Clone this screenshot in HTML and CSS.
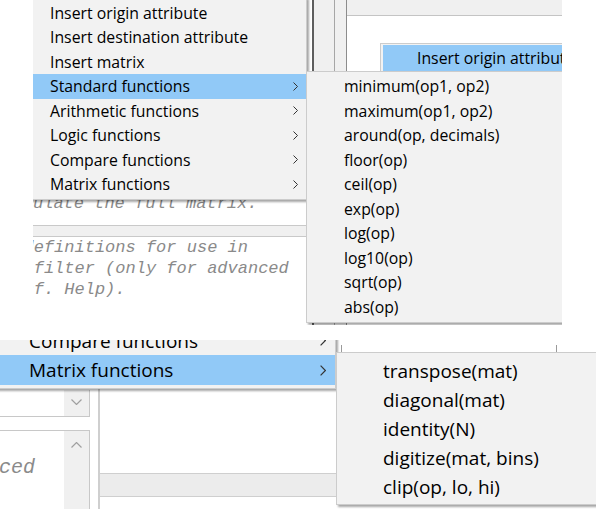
FILE: index.html
```html
<!DOCTYPE html>
<html>
<head>
<meta charset="utf-8">
<link rel="stylesheet" href="styles.css">
</head>
<body>
<div class="canvas">
  <section class="shot shot-top">
    <div class="bg">
      <div class="pane-left">
        <div class="editor editor-a">
          <div class="code">ulate the full matrix.</div>
        </div>
        <div class="splitter"></div>
        <div class="editor editor-b">
          <div class="code">definitions for use in</div>
          <div class="code"> filter (only for advanced</div>
          <div class="code">cf. Help).</div>
        </div>
      </div>
      <div class="pane-right">
        <div class="rcol rcol-1"></div>
        <div class="rcol rcol-2"></div>
        <div class="rcol rcol-3">
          <div class="toolbar"></div>
          <div class="dialog-area">
            <div class="menu popup">
              <div class="item active"><span class="label">Insert origin attribute</span></div>
            </div>
          </div>
        </div>
      </div>
    </div>

    <div class="menu main-menu">
      <div class="item"><span class="label">Insert origin attribute</span></div>
      <div class="item"><span class="label">Insert destination attribute</span></div>
      <div class="item"><span class="label">Insert matrix</span></div>
      <div class="item active"><span class="label">Standard functions</span><svg class="chev" viewBox="0 0 5 9"><polyline points="0.5,0.5 4.5,4.5 0.5,8.5"/></svg></div>
      <div class="item"><span class="label">Arithmetic functions</span><svg class="chev" viewBox="0 0 5 9"><polyline points="0.5,0.5 4.5,4.5 0.5,8.5"/></svg></div>
      <div class="item"><span class="label">Logic functions</span><svg class="chev" viewBox="0 0 5 9"><polyline points="0.5,0.5 4.5,4.5 0.5,8.5"/></svg></div>
      <div class="item"><span class="label">Compare functions</span><svg class="chev" viewBox="0 0 5 9"><polyline points="0.5,0.5 4.5,4.5 0.5,8.5"/></svg></div>
      <div class="item"><span class="label">Matrix functions</span><svg class="chev" viewBox="0 0 5 9"><polyline points="0.5,0.5 4.5,4.5 0.5,8.5"/></svg></div>
    </div>

    <div class="menu sub-menu">
      <div class="item"><span class="label">minimum(op1, op2)</span></div>
      <div class="item"><span class="label">maximum(op1, op2)</span></div>
      <div class="item"><span class="label">around(op, decimals)</span></div>
      <div class="item"><span class="label">floor(op)</span></div>
      <div class="item"><span class="label">ceil(op)</span></div>
      <div class="item"><span class="label">exp(op)</span></div>
      <div class="item"><span class="label">log(op)</span></div>
      <div class="item"><span class="label">log10(op)</span></div>
      <div class="item"><span class="label">sqrt(op)</span></div>
      <div class="item"><span class="label">abs(op)</span></div>
    </div>
  </section>

  <section class="shot shot-bottom">
    <div class="bg">
      <div class="b-left">
        <div class="field field-1">
          <div class="field-body"></div>
          <div class="scroll"><svg class="schev" viewBox="0 0 11 6"><polyline points="0.5,0.5 5.5,5.5 10.5,0.5"/></svg></div>
        </div>
        <div class="field field-2">
          <div class="field-body"><div class="code big">ced</div></div>
          <div class="scroll"><svg class="schev" viewBox="0 0 11 6"><polyline points="0.5,5.5 5.5,0.5 10.5,5.5"/></svg></div>
        </div>
      </div>
      <div class="b-right">
        <div class="frame"></div>
        <div class="band"></div>
      </div>
    </div>

    <div class="menu main-menu big">
      <div class="item"><span class="label">Insert origin attribute</span></div>
      <div class="item"><span class="label">Insert destination attribute</span></div>
      <div class="item"><span class="label">Insert matrix</span></div>
      <div class="item"><span class="label">Standard functions</span><svg class="chev" viewBox="0 0 5 9"><polyline points="0.5,0.5 4.5,4.5 0.5,8.5"/></svg></div>
      <div class="item"><span class="label">Arithmetic functions</span><svg class="chev" viewBox="0 0 5 9"><polyline points="0.5,0.5 4.5,4.5 0.5,8.5"/></svg></div>
      <div class="item"><span class="label">Logic functions</span><svg class="chev" viewBox="0 0 5 9"><polyline points="0.5,0.5 4.5,4.5 0.5,8.5"/></svg></div>
      <div class="item"><span class="label">Compare functions</span><svg class="chev" viewBox="0 0 5 9"><polyline points="0.5,0.5 4.5,4.5 0.5,8.5"/></svg></div>
      <div class="item active"><span class="label">Matrix functions</span><svg class="chev" viewBox="0 0 5 9"><polyline points="0.5,0.5 4.5,4.5 0.5,8.5"/></svg></div>
    </div>

    <div class="menu sub-menu big">
      <div class="item"><span class="label">transpose(mat)</span></div>
      <div class="item"><span class="label">diagonal(mat)</span></div>
      <div class="item"><span class="label">identity(N)</span></div>
      <div class="item"><span class="label">digitize(mat, bins)</span></div>
      <div class="item"><span class="label">clip(op, lo, hi)</span></div>
    </div>
  </section>
</div>
</body>
</html>
```

FILE: styles.css
```css
html, body {
  margin: 0;
  padding: 0;
  background: #ffffff;
}

.canvas {
  width: 596px;
  height: 509px;
  display: flex;
  flex-direction: column;
  overflow: hidden;
}

.shot {
  position: relative;
  overflow: hidden;
  flex: none;
  background: #ffffff;
}

.shot-top {
  margin-left: 33px;
  width: 529px;
  height: 325px;
}

.shot-bottom {
  margin-top: 15px;
  width: 596px;
  height: 169px;
}

.bg {
  display: flex;
  height: 100%;
}

/* ---------- top background ---------- */
.pane-left {
  width: 279px;
  flex: none;
  display: flex;
  flex-direction: column;
  background: #ffffff;
}

.code {
  font-family: "Liberation Mono", "DejaVu Sans Mono", monospace;
  font-style: italic;
  font-size: 17px;
  line-height: 21px;
  color: #8a8a8a;
  white-space: pre;
}

.editor-a {
  height: 225px;
  box-sizing: border-box;
  padding-top: 193px;
}

.splitter {
  height: 10px;
  background: #f0f0f0;
  border-top: 1px solid #c9c9c9;
  border-bottom: 1px solid #c9c9c9;
}

.editor-b {
  flex: 1;
  margin-left: -9.5px;
}

.pane-right {
  flex: 1;
  display: flex;
  border-left: 2px solid #5e5e5e;
}

.rcol-1 {
  width: 20px;
  background: #f0f0f0;
  border-right: 1px solid #a6a6a6;
}

.rcol-2 {
  width: 11px;
  background: #f0f0f0;
  border-right: 1px solid #8c8c8c;
}

.rcol-3 {
  flex: 1;
  display: flex;
  flex-direction: column;
}

.toolbar {
  height: 15px;
  background: #f0f0f0;
  border-bottom: 1px solid #c4c4c4;
}

.dialog-area {
  flex: 1;
  position: relative;
  background: #ffffff;
}

/* ---------- menus ---------- */
.menu {
  position: absolute;
  background: #f2f2f2;
  border: 1px solid #cccccc;
  box-shadow: 2px 2px 2px rgba(0, 0, 0, 0.35);
  font-family: "Open Sans", "Noto Sans", sans-serif;
  font-size: 15.8px;
  color: #000000;
  box-sizing: border-box;
}

.item {
  height: 24.5px;
  display: flex;
  align-items: center;
  padding-left: 37px;
  padding-right: 8px;
  white-space: nowrap;
}

.item.active {
  background: #91c9f7;
}

.label {
  flex: 1;
}

.chev {
  width: 5px;
  height: 9px;
  flex: none;
  fill: none;
  stroke: #333333;
  stroke-width: 1;
}

.main-menu {
  left: -21px;
  top: -3px;
  width: 295px;
  padding: 2.5px 0;
}

.sub-menu {
  left: 273px;
  top: 70.5px;
  width: 320px;
  padding: 2.5px 0;
}

.popup {
  left: 33px;
  top: 27px;
  width: 240px;
  padding: 1px 0 0 2px;
  box-shadow: none;
}

.popup .item {
  height: 26px;
  padding-left: 34px;
}

/* ---------- bottom (enlarged) ---------- */
.menu.big {
  font-size: 19px;
}

.menu.big .item {
  height: 29.4px;
  padding-left: 46px;
  padding-right: 9px;
}

.menu.big .chev {
  width: 6px;
  height: 11px;
}

.main-menu.big {
  left: -18px;
  top: -194.3px;
  width: 354px;
  padding: 3px 0;
}

.sub-menu.big {
  left: 336px;
  top: 12px;
  width: 300px;
  padding: 3px 0;
}

.sub-menu.big .item {
  height: 29px;
}

.b-left {
  width: 100px;
  flex: none;
  border-right: 2px solid #cfcfcf;
  display: flex;
  flex-direction: column;
  padding-top: 50px;
  box-sizing: border-box;
}

.field {
  display: flex;
  width: 90px;
  border-right: 1px solid #c8c8c8;
  box-sizing: border-box;
}

.field-1 {
  height: 27px;
  border-bottom: 1px solid #c8c8c8;
}

.field-2 {
  margin-top: 13px;
  flex: 1;
  border-top: 1px solid #c8c8c8;
}

.field-body {
  flex: 1;
  overflow: hidden;
}

.field-2 .field-body {
  padding-top: 25px;
}

.code.big {
  font-size: 20px;
  line-height: 24px;
  margin-left: -1px;
}

.scroll {
  width: 25px;
  background: #f0f0f0;
  display: flex;
  justify-content: center;
  align-items: flex-start;
  padding-top: 9px;
  box-sizing: border-box;
}

.schev {
  width: 11px;
  height: 6px;
  fill: none;
  stroke: #a0a0a0;
  stroke-width: 1.2;
}

.field-2 .scroll {
  padding-top: 11px;
}

.b-right {
  flex: 1;
  display: flex;
  flex-direction: column;
}

.frame {
  margin-top: 5px;
  margin-left: 241px;
  width: 214px;
  height: 8px;
  border-left: 1px solid #9a9a9a;
  border-right: 1px solid #9a9a9a;
}

.band {
  margin-top: 120px;
  height: 22px;
  background: #ececec;
  border-top: 1px solid #cfcfcf;
  border-bottom: 1px solid #cfcfcf;
}
```
